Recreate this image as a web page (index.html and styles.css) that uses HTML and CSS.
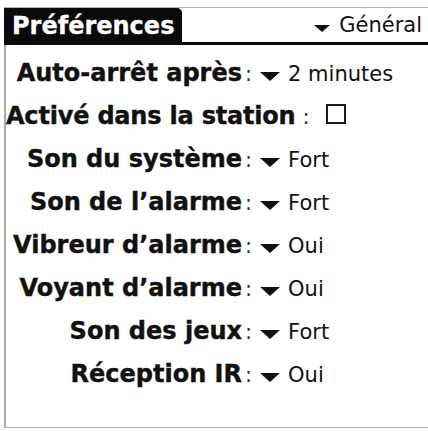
FILE: index.html
```html
<!DOCTYPE html>
<html lang="fr">
<head>
<meta charset="utf-8">
<title>Préférences</title>
<link rel="stylesheet" href="styles.css">
</head>
<body>
<div class="screen">
  <div class="titlebar">
    <div class="tab">Préférences</div>
    <div class="picker"><span class="tri tri-head"></span><span class="picker-text">Général</span></div>
  </div>
  <div class="form">
    <div class="row"><span class="label">Auto-arrêt après</span><span class="colon">:</span><span class="tri"></span><span class="val">2 minutes</span></div>
    <div class="row row-free"><span class="label label-free">Activé dans la station</span><span class="colon colon-free">:</span><span class="check"></span></div>
    <div class="row"><span class="label">Son du système</span><span class="colon">:</span><span class="tri"></span><span class="val">Fort</span></div>
    <div class="row"><span class="label">Son de l’alarme</span><span class="colon">:</span><span class="tri"></span><span class="val">Fort</span></div>
    <div class="row"><span class="label">Vibreur d’alarme</span><span class="colon">:</span><span class="tri"></span><span class="val">Oui</span></div>
    <div class="row"><span class="label">Voyant d’alarme</span><span class="colon">:</span><span class="tri"></span><span class="val">Oui</span></div>
    <div class="row"><span class="label">Son des jeux</span><span class="colon">:</span><span class="tri"></span><span class="val">Fort</span></div>
    <div class="row"><span class="label">Réception IR</span><span class="colon">:</span><span class="tri"></span><span class="val">Oui</span></div>
  </div>
</div>
</body>
</html>
```

FILE: styles.css
```css
html, body {
  margin: 0;
  padding: 0;
  background: #ffffff;
}

body {
  font-family: "DejaVu Sans", "Liberation Sans", sans-serif;
  color: #111111;
}

.screen {
  margin: 7px 0 0 4px;
  border-top: 1px solid #b4b4b4;
}

.titlebar {
  display: flex;
  height: 34px;
  border-bottom: 3px solid #0a0a0a;
}

.tab {
  width: 170px;
  padding: 2px 0 0 8px;
  background: #0a0a0a;
  color: #ffffff;
  font-weight: bold;
  font-size: 24px;
  line-height: 32px;
  border-top-right-radius: 5px;
  -webkit-text-stroke: 0.3px #ffffff;
}

.picker {
  flex: 1;
  display: flex;
  justify-content: flex-end;
  align-items: baseline;
  padding: 1px 6px 0 0;
  font-size: 21px;
  line-height: 33px;
}

.picker-text {
  margin-left: 9px;
}

.tri {
  display: inline-block;
  width: 0;
  height: 0;
  border-left: 10px solid transparent;
  border-right: 10px solid transparent;
  border-top: 9px solid #111111;
  margin-left: 8px;
  margin-bottom: 1px;
}

.tri-head {
  border-left-width: 8px;
  border-right-width: 8px;
  border-top-width: 7px;
  margin-left: 0;
  margin-bottom: 6px;
}

.form {
  border-left: 2px solid #a8a8a8;
  border-bottom: 1px solid #b4b4b4;
  padding: 7px 0 31px 0;
}

.row {
  display: flex;
  align-items: baseline;
  height: 43px;
}

.label {
  width: 236px;
  flex: none;
  text-align: right;
  font-weight: bold;
  font-size: 24px;
  line-height: 43px;
  white-space: nowrap;
  -webkit-text-stroke: 0.4px #111111;
}

.label-free {
  width: auto;
  text-align: left;
  letter-spacing: -0.2px;
}

.colon {
  margin-left: 3px;
  font-size: 21px;
  color: #333333;
}

.colon-free {
  margin-left: 7px;
}

.val {
  margin-left: 8px;
  font-size: 21px;
  white-space: nowrap;
}

.check {
  display: inline-block;
  width: 16px;
  height: 16px;
  border: 2px solid #1a1a1a;
  margin-left: 16px;
  vertical-align: -4px;
}
```
